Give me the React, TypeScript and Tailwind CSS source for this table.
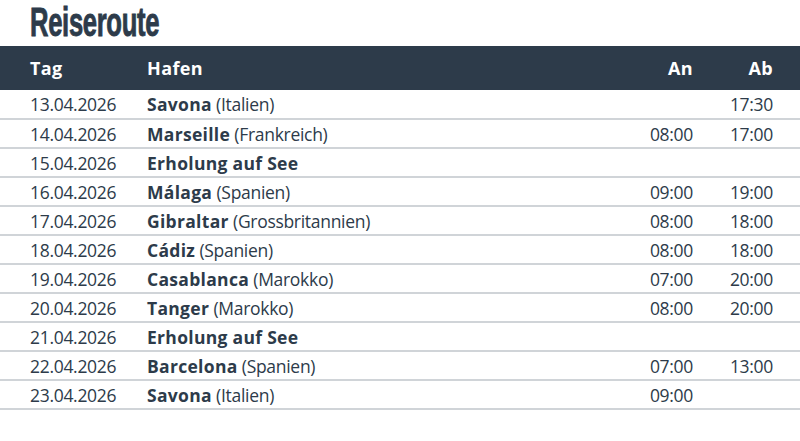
import React from 'react';

interface Stop {
  tag: string;
  hafen: string;
  land?: string;
  an?: string;
  ab?: string;
}

const stops: Stop[] = [
  { tag: '13.04.2026', hafen: 'Savona', land: 'Italien', ab: '17:30' },
  { tag: '14.04.2026', hafen: 'Marseille', land: 'Frankreich', an: '08:00', ab: '17:00' },
  { tag: '15.04.2026', hafen: 'Erholung auf See' },
  { tag: '16.04.2026', hafen: 'Málaga', land: 'Spanien', an: '09:00', ab: '19:00' },
  { tag: '17.04.2026', hafen: 'Gibraltar', land: 'Grossbritannien', an: '08:00', ab: '18:00' },
  { tag: '18.04.2026', hafen: 'Cádiz', land: 'Spanien', an: '08:00', ab: '18:00' },
  { tag: '19.04.2026', hafen: 'Casablanca', land: 'Marokko', an: '07:00', ab: '20:00' },
  { tag: '20.04.2026', hafen: 'Tanger', land: 'Marokko', an: '08:00', ab: '20:00' },
  { tag: '21.04.2026', hafen: 'Erholung auf See' },
  { tag: '22.04.2026', hafen: 'Barcelona', land: 'Spanien', an: '07:00', ab: '13:00' },
  { tag: '23.04.2026', hafen: 'Savona', land: 'Italien', an: '09:00' },
];

const App: React.FC = () => {
  return (
    <div className="w-[800px] h-[441px] bg-white text-[#2d3b4a] font-['Open_Sans',sans-serif]">
      <h1 className="h-[46px] pl-[30px] overflow-hidden">
        <span className="inline-block origin-left scale-x-[0.64] font-['Liberation_Sans_Narrow','Liberation_Sans',sans-serif] font-bold text-[40px] leading-[44px] tracking-[-0.5px] [-webkit-text-stroke:0.9px_#2d3b4a]">
          Reiseroute
        </span>
      </h1>

      <table className="w-full table-fixed border-collapse">
        <colgroup>
          <col className="w-[147px]" />
          <col />
          <col className="w-[80px]" />
          <col className="w-[80px]" />
        </colgroup>
        <thead>
          <tr className="h-[44px] bg-[#2d3b4a] text-white text-[18px] font-bold tracking-[0.4px]">
            <th className="pl-[30px] text-left font-bold">Tag</th>
            <th className="text-left font-bold">Hafen</th>
            <th className="pr-[27px] text-right font-bold">An</th>
            <th className="pr-[27px] text-right font-bold">Ab</th>
          </tr>
        </thead>
        <tbody className="text-[17.5px] leading-[24px] tracking-[-0.3px]">
          {stops.map((s) => (
            <tr key={s.tag} className="h-[29px] border-b-2 border-[#d0d4d8]">
              <td className="pl-[30px]">{s.tag}</td>
              <td className="whitespace-nowrap">
                <span className="font-bold tracking-[0.3px]">{s.hafen}</span>
                {s.land && <span> ({s.land})</span>}
              </td>
              <td className="pr-[27px] text-right">{s.an}</td>
              <td className="pr-[27px] text-right">{s.ab}</td>
            </tr>
          ))}
        </tbody>
      </table>
    </div>
  );
};

export default App;
